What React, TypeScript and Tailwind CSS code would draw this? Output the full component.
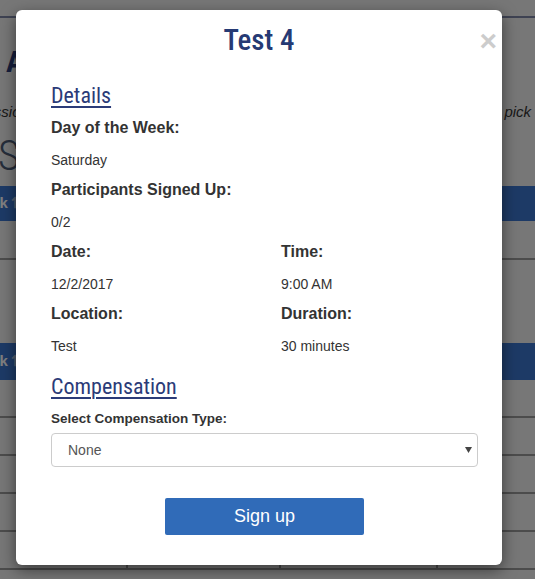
const heading = { fontFamily: '"Roboto Condensed", Roboto, "Liberation Sans", sans-serif' };
const body = { fontFamily: '"Liberation Sans", Arial, sans-serif' };

function Field({ label, value }: { label: string; value: string }) {
  return (
    <div>
      <div className="text-[16px] font-bold leading-[22px] text-[#333]">{label}</div>
      <div className="mt-[11px] text-[14px] leading-[20px] text-[#333]">{value}</div>
    </div>
  );
}

function SortBar({ tall }: { tall?: boolean }) {
  return (
    <div
      className={`flex items-center gap-[3px] bg-[#3a74cc] text-[15px] font-bold text-white ${
        tall ? "h-[37px]" : "h-[35px]"
      }`}
    >
      <span className="-ml-[31px]">Week</span>
      <span className="text-[#a9bde0]">⇅</span>
    </div>
  );
}

function BackgroundPage() {
  return (
    <div className="min-h-[579px] w-full overflow-hidden bg-[#eeeeee]" style={body}>
      <div className="h-[16px]" />
      <div className="h-[2px] bg-[#7c84a4]" />
      <div className="pt-[26px] pl-[6px] text-[30px] font-bold leading-[36px] text-[#2c3d79]" style={heading}>
        Available Sessions
      </div>
      <p className="mt-[22px] -ml-[22px] whitespace-nowrap text-[15px] italic leading-[20px] text-[#333]">
        session below to view its details. To sign up, please leave your information and pick a time.
      </p>
      <div className="mt-[10px] -ml-[2px] text-[42px] font-light leading-[48px] text-[#4a5a75]" style={heading}>
        Sessions
      </div>
      <div className="mt-[6px]">
        <SortBar />
      </div>
      <div className="h-[39px] border-b-2 border-[#999]" />
      <div className="h-[83px]" />
      <SortBar tall />
      {[0, 1, 2, 3, 4].map((i) => (
        <div key={i} className="grid h-[38px] grid-cols-[128px_153px_157px_1fr] border-b-2 border-[#999]">
          <div className="border-r-2 border-[#999]" />
          <div className="border-r-2 border-[#999]" />
          <div className="border-r-2 border-[#999]" />
          <div />
        </div>
      ))}
    </div>
  );
}

export default function App() {
  return (
    <div className="relative h-[579px] w-[535px] overflow-hidden">
      <BackgroundPage />
      <div className="absolute inset-0 bg-black/50" />
      <div
        className="absolute left-[16px] top-[10px] w-[486px] rounded-[6px] bg-white shadow-[0_5px_15px_rgba(0,0,0,0.5)]"
        style={body}
      >
        <div className="relative flex h-[60px] items-center justify-center">
          <h1 className="text-[29px] font-medium leading-none text-[#253a74]" style={heading}>
            Test 4
          </h1>
          <button className="absolute right-[5px] top-[16px] text-[30px] font-bold leading-none text-[#cccccc]">
            ×
          </button>
        </div>

        <div className="pl-[35px] pr-[24px] pb-[30px]">
          <h2
            className="mt-[12px] inline-block text-[22px] leading-[28px] text-[#2b3b78] underline decoration-2 underline-offset-[3px]"
            style={heading}
          >
            Details
          </h2>

          <div className="mt-[7px] flex flex-col gap-[9px]">
            <Field label="Day of the Week:" value="Saturday" />
            <Field label="Participants Signed Up:" value="0/2" />
            <div className="grid grid-cols-[230px_1fr]">
              <Field label="Date:" value="12/2/2017" />
              <Field label="Time:" value="9:00 AM" />
            </div>
            <div className="grid grid-cols-[230px_1fr]">
              <Field label="Location:" value="Test" />
              <Field label="Duration:" value="30 minutes" />
            </div>
          </div>

          <h2
            className="mt-[17px] inline-block text-[22px] leading-[28px] text-[#2b3b78] underline decoration-2 underline-offset-[3px]"
            style={heading}
          >
            Compensation
          </h2>

          <label className="mt-[8px] block text-[13.5px] font-bold leading-[20px] text-[#333]">
            Select Compensation Type:
          </label>
          <div className="relative mt-[4px]">
            <select className="h-[34px] w-full appearance-none rounded-[4px] border border-[#cccccc] bg-white pl-[16px] text-[14px] text-[#555] outline-none">
              <option>None</option>
            </select>
            <svg
              className="pointer-events-none absolute right-[6px] top-[14px]"
              width="7"
              height="6"
              viewBox="0 0 7 6"
            >
              <path d="M0 0h7L3.5 6z" fill="#444" />
            </svg>
          </div>

          <div className="mt-[31px] flex justify-center">
            <button className="h-[37px] w-[199px] rounded-[2px] bg-[#306bb8] text-[18px] text-white">
              Sign up
            </button>
          </div>
        </div>
      </div>
    </div>
  );
}
